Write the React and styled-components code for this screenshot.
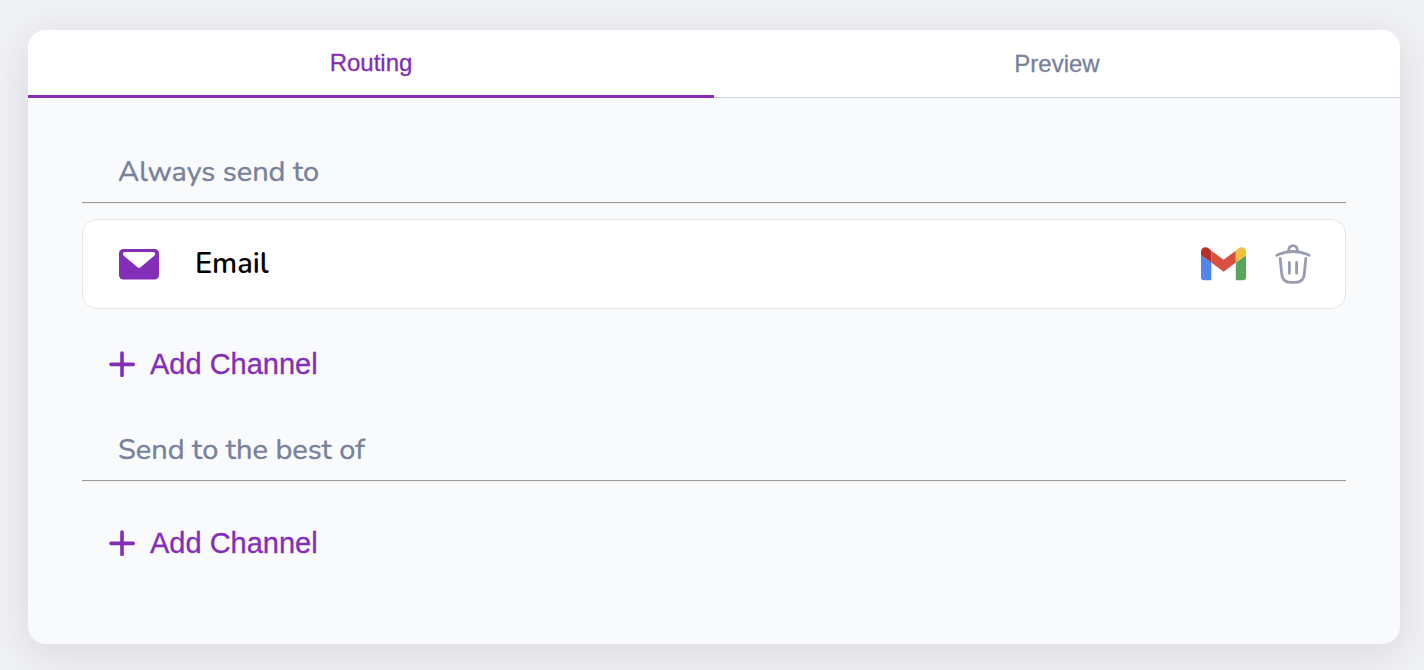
import React, { useState } from "react";
import styled, { createGlobalStyle } from "styled-components";

const purple = "#832db9";
const slate = "#77819c";

const GlobalStyle = createGlobalStyle`
  *, *::before, *::after { box-sizing: border-box; }
  body {
    margin: 0;
    background: #f0f1f3;
    font-family: "Liberation Sans", Arial, sans-serif;
  }
`;

const Page = styled.main`
  padding: 30px 24px 26px 28px;
`;

const Card = styled.section`
  border-radius: 18px;
  background: #f9fafc;
  box-shadow: 0 8px 40px rgba(60, 40, 80, 0.12);
`;

const TabList = styled.div`
  display: grid;
  grid-template-columns: 1fr 1fr;
  height: 68px;
  background: #fff;
  border-radius: 18px 18px 0 0;
`;

const Tab = styled.button`
  padding: 0;
  border: 0;
  border-bottom: ${(p) => (p.$active ? `3px solid ${purple}` : "1px solid #cfd2d8")};
  background: transparent;
  color: ${(p) => (p.$active ? purple : slate)};
  font: 400 24px/28px "Liberation Sans", Arial, sans-serif;
  -webkit-text-stroke: 0.3px currentColor;
  cursor: pointer;
`;

const Panel = styled.div`
  padding: 54px 54px 81px;
`;

const Group = styled.section`
  & + & {
    margin-top: 46px;
  }
`;

const Heading = styled.h2`
  margin: 0;
  padding-left: 36px;
  color: ${slate};
  font: 400 29px/40px Nunito, "Noto Sans", sans-serif;
  -webkit-text-stroke: 0.4px currentColor;
`;

const Rule = styled.hr`
  height: 2px;
  margin: 10px 0 0;
  border: solid;
  border-width: 1px 0;
  border-color: #999a9c transparent #eeeeee;
`;

const Channel = styled.div`
  display: flex;
  align-items: center;
  height: 90px;
  margin-top: 15px;
  padding: 0 34px 0 36px;
  border: 1px solid #e5e6e9;
  border-radius: 15px;
  background: #fff;
`;

const ChannelName = styled.span`
  flex: 1;
  margin-left: 36px;
  color: #000;
  font: 600 29px/40px Nunito, "Noto Sans", sans-serif;
`;

const IconButton = styled.button`
  display: flex;
  margin-left: 28px;
  padding: 0;
  border: 0;
  background: transparent;
  cursor: pointer;
`;

const AddButton = styled.button`
  display: flex;
  align-items: center;
  gap: 15px;
  height: 40px;
  margin: ${(p) => (p.$empty ? "41px" : "35px")} 0 0 27px;
  padding: 0;
  border: 0;
  background: transparent;
  color: ${purple};
  font: 400 29px/40px "Liberation Sans", Arial, sans-serif;
  -webkit-text-stroke: 0.3px currentColor;
  cursor: pointer;
`;

const MailIcon = () => (
  <svg width="40" height="32" viewBox="0 0 40 32" aria-hidden="true">
    <rect y="1" width="40" height="30.5" rx="4.5" fill={purple} />
    <path d="M5.8 4H34.2C36.3 4 36.8 6.6 35 8.1L21.5 19.2Q20 20.4 18.5 19.2L5 8.1C3.2 6.6 3.7 4 5.8 4Z" fill="#fff" />
  </svg>
);

const GmailIcon = () => (
  <svg width="46" height="34" viewBox="0 0 46 34" role="img" aria-label="Gmail">
    <g transform="scale(.98 .975)">
      <path d="M0 8.5L10.5 16V34H3Q0 34 0 31Z" fill="#5186ec" />
      <path d="M46 8.5L35.5 16V34H43Q46 34 46 31Z" fill="#58a65c" />
      <path d="M10.5 3.8L23 13L35.5 3.8V16L23 25.5L10.5 16Z" fill="#d8503f" />
      <path d="M0 5C0 .4 4.6-1.1 8 1.6L10.5 3.8V16L0 8.5Z" fill="#b53026" />
      <path d="M46 5C46 .4 41.4-1.1 38 1.6L35.5 3.8V16L46 8.5Z" fill="#f2be42" />
    </g>
  </svg>
);

const TrashIcon = () => (
  <svg width="36" height="40" viewBox="0 0 36 40" fill="none" stroke="#9a9db0" strokeWidth="2.8" strokeLinecap="round" aria-hidden="true">
    <path d="M1.8 11.2Q18 3.8 34.2 11.2" />
    <path d="M13.8 7V5.7A4.2 4 0 0 1 22.2 5.7V7" />
    <path d="M5.2 14.5L6.7 30Q7.6 38.3 15 38.3H21Q28.4 38.3 29.3 30L30.8 14.5" />
    <path d="M14.4 18.3V29.3M21.6 18.3V29.3" />
  </svg>
);

const PlusIcon = () => (
  <svg width="26" height="26" viewBox="0 0 26 26" fill="none" stroke={purple} strokeWidth="3.6" strokeLinecap="round" aria-hidden="true">
    <path d="M13 2V24.4M2 13.4H24.2" />
  </svg>
);

const AddChannel = ({ empty }) => (
  <AddButton type="button" $empty={empty}>
    <PlusIcon />
    Add Channel
  </AddButton>
);

export default function App() {
  const [tab, setTab] = useState("Routing");
  return (
    <Page>
      <GlobalStyle />
      <Card>
        <TabList role="tablist">
          {["Routing", "Preview"].map((name) => (
            <Tab key={name} type="button" role="tab" aria-selected={tab === name} $active={tab === name} onClick={() => setTab(name)}>
              {name}
            </Tab>
          ))}
        </TabList>
        <Panel role="tabpanel">
          <Group>
            <Heading>Always send to</Heading>
            <Rule />
            <Channel>
              <MailIcon />
              <ChannelName>Email</ChannelName>
              <GmailIcon />
              <IconButton type="button" aria-label="Remove Email">
                <TrashIcon />
              </IconButton>
            </Channel>
            <AddChannel />
          </Group>
          <Group>
            <Heading>Send to the best of</Heading>
            <Rule />
            <AddChannel empty />
          </Group>
        </Panel>
      </Card>
    </Page>
  );
}
